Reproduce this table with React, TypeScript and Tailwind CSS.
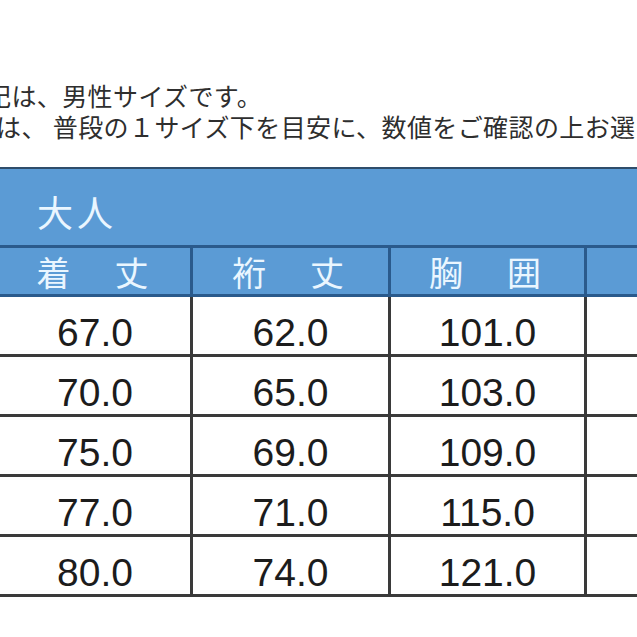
const rows = [
  ["67.0", "62.0", "101.0"],
  ["70.0", "65.0", "103.0"],
  ["75.0", "69.0", "109.0"],
  ["77.0", "71.0", "115.0"],
  ["80.0", "74.0", "121.0"],
];

const headers = ["着　丈", "裄　丈", "胸　囲"];
const widths = ["w-[193px]", "w-[198px]", "w-[196px]"];

export default function App() {
  return (
    <div className="w-[637px] h-[637px] overflow-hidden bg-white">
      {/* notes above the table */}
      <div
        className="pt-[80px] text-[25px] tracking-[0.4px] leading-[31px] text-[#2e2e2e] whitespace-nowrap"
        style={{ fontFamily: '"Noto Sans CJK JP", sans-serif' }}
      >
        <p className="-ml-[14px]">記は、男性サイズです。</p>
        <p className="-ml-[4px]">
          <span className="mr-[6px]">は、</span>普段の１サイズ下を目安に、数値をご確認の上お選びください。
        </p>
      </div>

      {/* size table */}
      <div className="mt-[25px] w-[900px] border-t-2 border-[#2f4d6b]">
        <div
          className="h-[76px] bg-[#5b9bd5] flex items-center pl-[37px] pt-[8px] text-[36px] tracking-[4px] text-[#eaf6ff]"
          style={{ fontFamily: '"Noto Sans CJK JP", sans-serif' }}
        >
          大人
        </div>
        <div className="flex h-[52px] bg-[#5b9bd5] border-y-[3px] border-[#2a5a8c]">
          {headers.map((h, i) => (
            <div
              key={h}
              className={`${widths[i]} shrink-0 border-r-[3px] border-[#2a5a8c] flex items-center justify-center text-[34px] tracking-[5px] text-[#eaf6ff]`}
              style={{ fontFamily: '"Noto Sans CJK JP", sans-serif' }}
            >
              {h}
            </div>
          ))}
          <div className="flex-1" />
        </div>
        {rows.map((r) => (
          <div key={r[0]} className="flex h-[60px] border-b-[3px] border-[#3a3a3a]">
            {r.map((v, i) => (
              <div
                key={i}
                className={`${widths[i]} shrink-0 border-r-[3px] border-[#3a3a3a] flex items-center justify-center pt-[16px] text-[39px] text-[#1c1c1c]`}
                style={{ fontFamily: '"Liberation Sans", Arial, sans-serif' }}
              >
                {v}
              </div>
            ))}
            <div className="flex-1" />
          </div>
        ))}
      </div>
    </div>
  );
}
